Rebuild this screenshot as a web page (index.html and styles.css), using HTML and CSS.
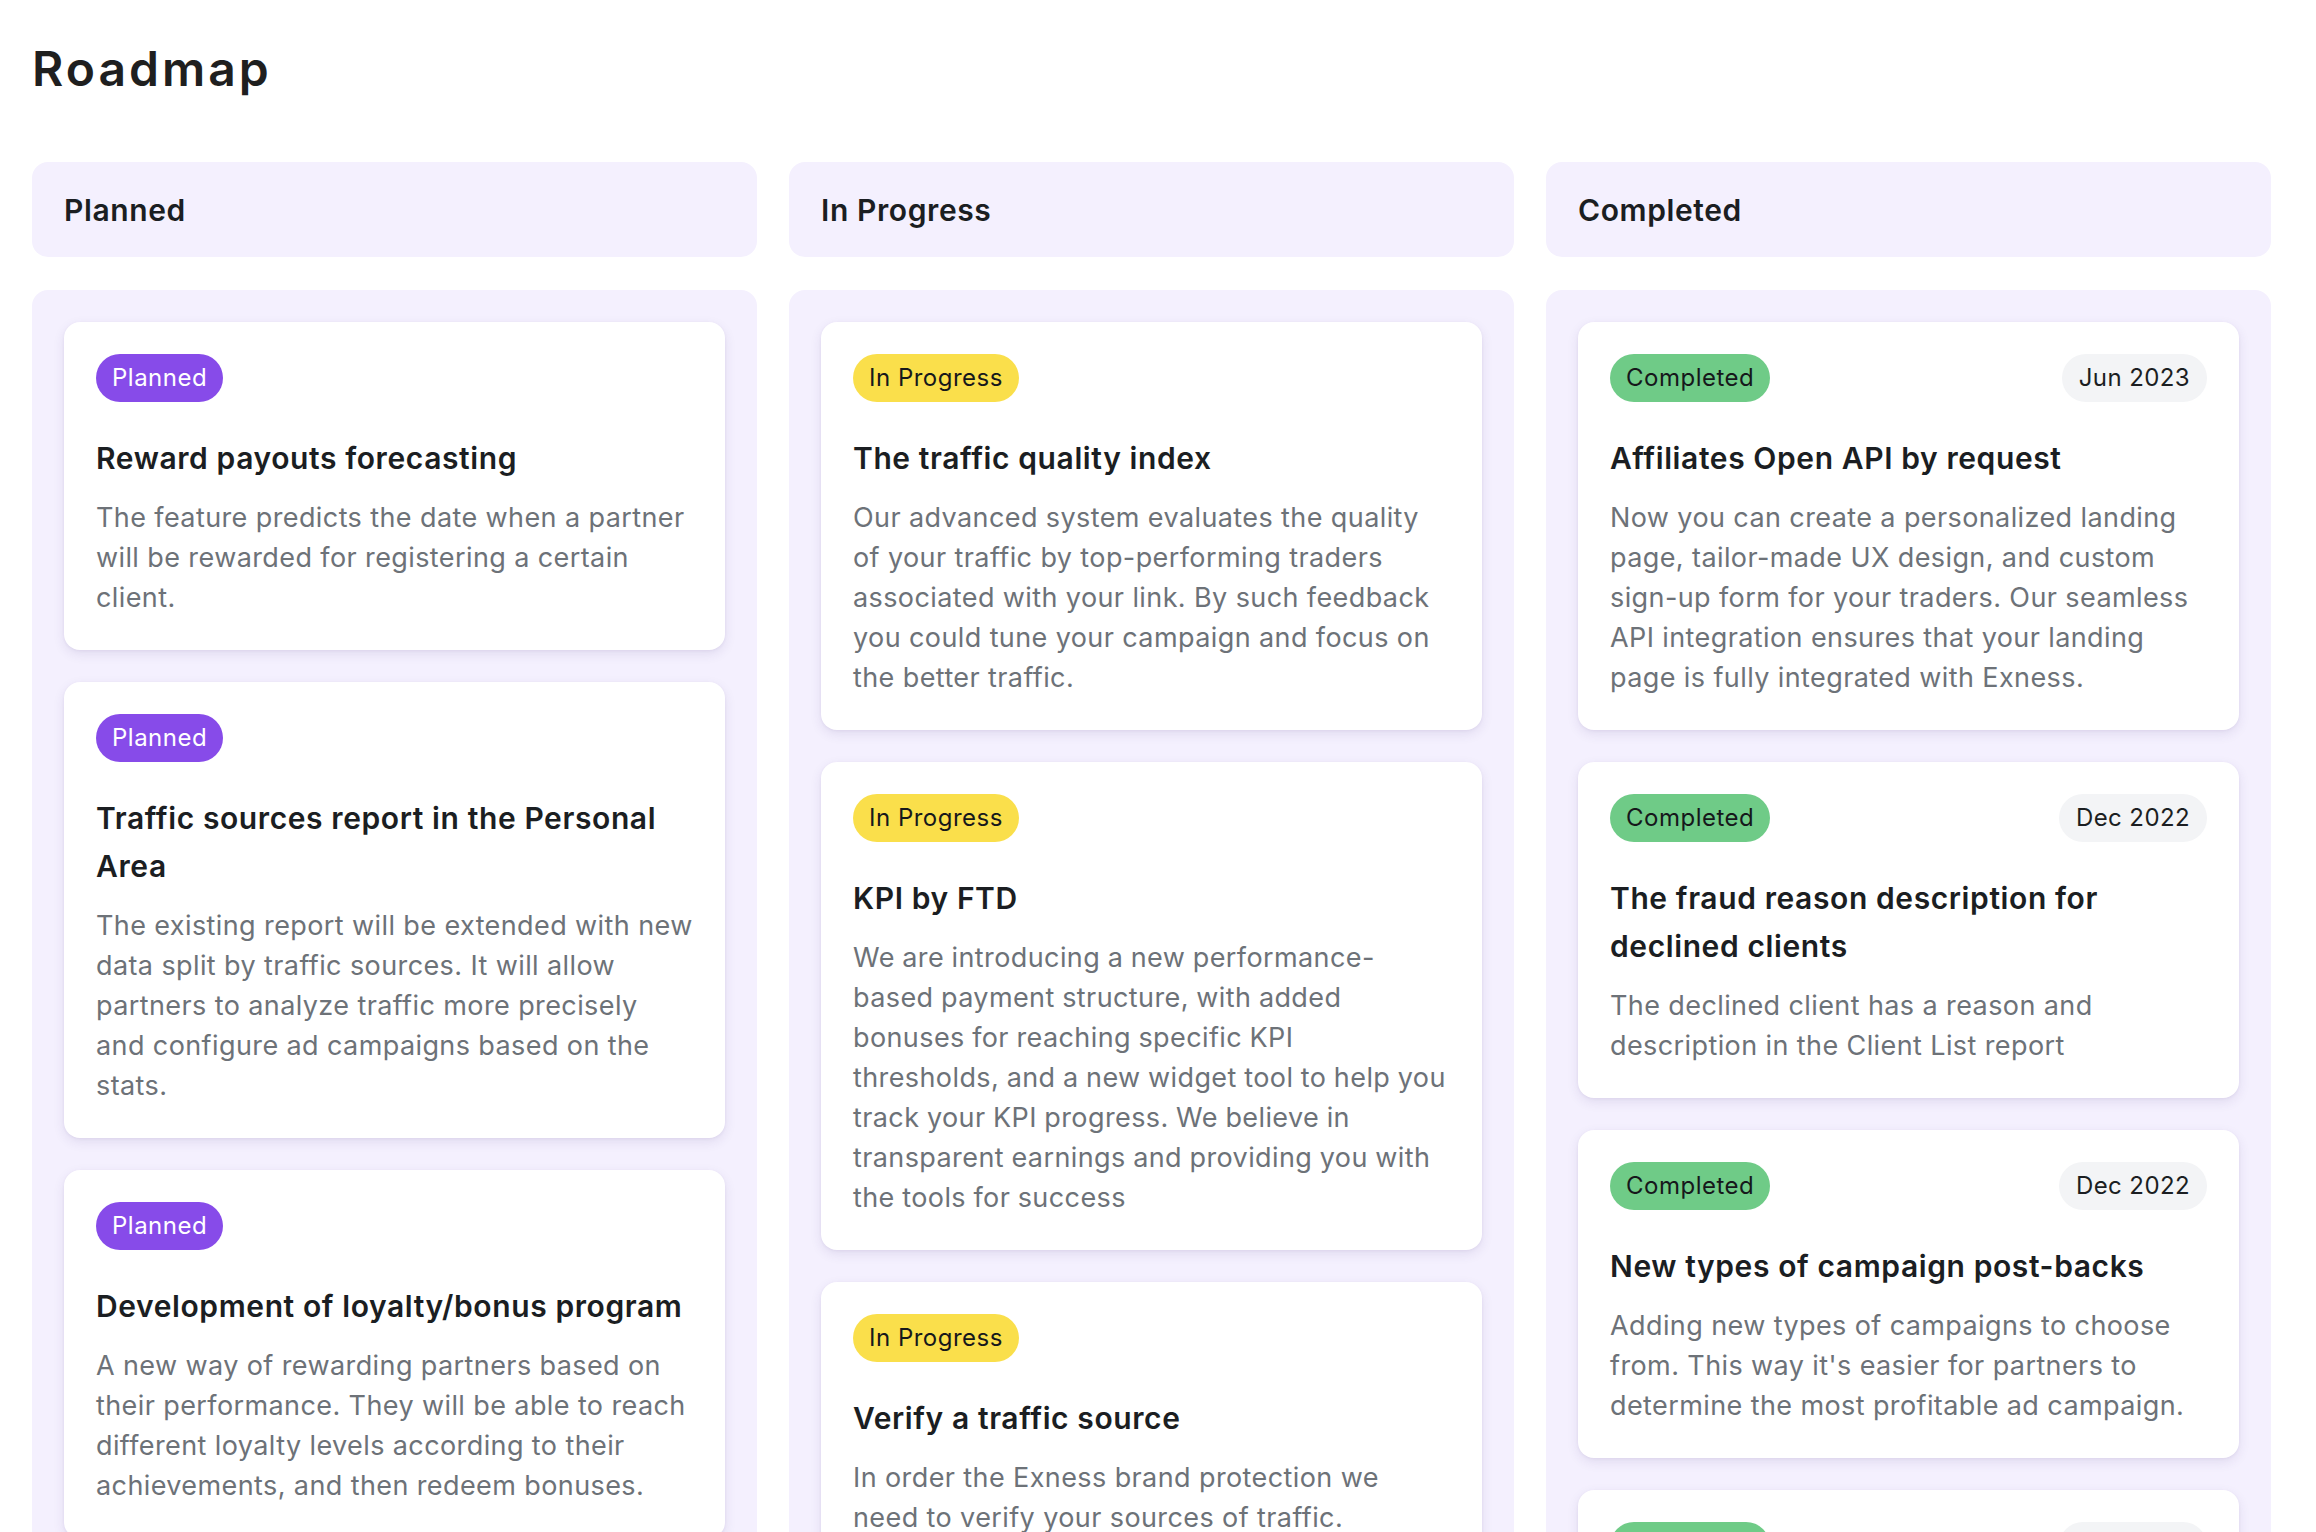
FILE: index.html
```html
<!DOCTYPE html>
<html lang="en">
<head>
<meta charset="utf-8">
<title>Roadmap</title>
<link rel="stylesheet" href="styles.css">
</head>
<body>
<main class="page">
  <h1 class="page-title">Roadmap</h1>
  <div class="board">
    <section class="column">
      <div class="column-header">Planned</div>
      <div class="column-body">
        <article class="card">
          <div class="card-top"><span class="badge badge-planned">Planned</span></div>
          <h3 class="card-title">Reward payouts forecasting</h3>
          <p class="card-text">The feature predicts the date when a partner will be rewarded for registering a certain client.</p>
        </article>
        <article class="card">
          <div class="card-top"><span class="badge badge-planned">Planned</span></div>
          <h3 class="card-title">Traffic sources report in the Personal Area</h3>
          <p class="card-text">The existing report will be extended with new data split by traffic sources. It will allow partners to analyze traffic more precisely and configure ad campaigns based on the stats.</p>
        </article>
        <article class="card">
          <div class="card-top"><span class="badge badge-planned">Planned</span></div>
          <h3 class="card-title">Development of loyalty/bonus program</h3>
          <p class="card-text">A new way of rewarding partners based on their performance. They will be able to reach different loyalty levels according to their achievements, and then redeem bonuses.</p>
        </article>
      </div>
    </section>
    <section class="column">
      <div class="column-header">In Progress</div>
      <div class="column-body">
        <article class="card">
          <div class="card-top"><span class="badge badge-progress">In Progress</span></div>
          <h3 class="card-title">The traffic quality index</h3>
          <p class="card-text">Our advanced system evaluates the quality of your traffic by top-performing traders associated with your link. By such feedback you could tune your campaign and focus on the better traffic.</p>
        </article>
        <article class="card">
          <div class="card-top"><span class="badge badge-progress">In Progress</span></div>
          <h3 class="card-title">KPI by FTD</h3>
          <p class="card-text card-text-tight">We are introducing a new performance-based payment structure, with added bonuses for reaching specific KPI<br>thresholds, and a new widget tool to help you track your KPI progress. We believe in transparent earnings and providing you with the tools for success</p>
        </article>
        <article class="card">
          <div class="card-top"><span class="badge badge-progress">In Progress</span></div>
          <h3 class="card-title">Verify a traffic source</h3>
          <p class="card-text">In order the Exness brand protection we need to verify your sources of traffic.</p>
        </article>
      </div>
    </section>
    <section class="column">
      <div class="column-header">Completed</div>
      <div class="column-body">
        <article class="card">
          <div class="card-top"><span class="badge badge-done">Completed</span><span class="date">Jun 2023</span></div>
          <h3 class="card-title">Affiliates Open API by request</h3>
          <p class="card-text">Now you can create a personalized landing page, tailor-made UX design, and custom sign-up form for your traders. Our seamless API integration ensures that your landing page is fully integrated with Exness.</p>
        </article>
        <article class="card">
          <div class="card-top"><span class="badge badge-done">Completed</span><span class="date">Dec 2022</span></div>
          <h3 class="card-title">The fraud reason description for declined clients</h3>
          <p class="card-text">The declined client has a reason and description in the Client List report</p>
        </article>
        <article class="card">
          <div class="card-top"><span class="badge badge-done">Completed</span><span class="date">Dec 2022</span></div>
          <h3 class="card-title">New types of campaign post-backs</h3>
          <p class="card-text">Adding new types of campaigns to choose from. This way it's easier for partners to determine the most profitable ad campaign.</p>
        </article>
        <article class="card">
          <div class="card-top"><span class="badge badge-done">Completed</span><span class="date">Nov 2022</span></div>
          <h3 class="card-title">Partner statistics export</h3>
          <p class="card-text">Export detailed statistics reports directly from the Personal Area.</p>
        </article>
      </div>
    </section>
  </div>
</main>
</body>
</html>
```

FILE: styles.css
```css
* { box-sizing: border-box; }
html, body { margin: 0; padding: 0; background: #ffffff; }
body {
  font-family: "Inter", "Liberation Sans", sans-serif;
  color: #1b1e22;
}
.page {
  padding: 40px 44px 0 32px;
}
.page-title {
  margin: 0 0 64px;
  font-size: 48px;
  line-height: 57.6px;
  font-weight: 600;
  letter-spacing: 3px;
  color: #1f1f1f;
}
.board {
  display: grid;
  grid-template-columns: repeat(3, 725px);
  column-gap: 32px;
  align-items: start;
}
.column {
  display: flex;
  flex-direction: column;
  gap: 33px;
}
.column-header {
  height: 95px;
  display: flex;
  align-items: center;
  padding: 2px 32px 0;
  background: #f4f0fe;
  border-radius: 16px;
  font-size: 30px;
  font-weight: 600;
  letter-spacing: 0.6px;
  color: #1b1e22;
}
.column-body {
  background: #f4f0fe;
  border-radius: 16px;
  padding: 32px;
  display: flex;
  flex-direction: column;
  gap: 32px;
}
.card {
  background: #ffffff;
  border-radius: 16px;
  padding: 32px;
  box-shadow: 0 4px 12px rgba(60, 40, 120, 0.10), 0 1px 3px rgba(60, 40, 120, 0.06);
}
.card-top {
  display: flex;
  justify-content: space-between;
  align-items: center;
  height: 48px;
}
.badge, .date {
  display: inline-flex;
  align-items: center;
  height: 48px;
  padding: 0 16px;
  border-radius: 24px;
  font-size: 24px;
  letter-spacing: 0.5px;
  font-weight: 400;
}
.date { padding: 0 17px; letter-spacing: 0.4px; }
.badge-planned { background: #874be9; color: #ffffff; }
.badge-progress { background: #fadf4b; color: #16181b; }
.badge-done { background: #6fcb87; color: #16181b; }
.date { background: #f3f4f6; color: #1b1e22; }
.card-title {
  margin: 32px 0 16px;
  font-size: 30px;
  line-height: 48px;
  font-weight: 600;
  letter-spacing: 0.6px;
  color: #1b1e22;
}
.card-text {
  margin: 0;
  font-size: 27px;
  line-height: 40px;
  letter-spacing: 0.4px;
  color: #6d7278;
}
.card-text-tight {
  word-spacing: -0.5px;
}
```
